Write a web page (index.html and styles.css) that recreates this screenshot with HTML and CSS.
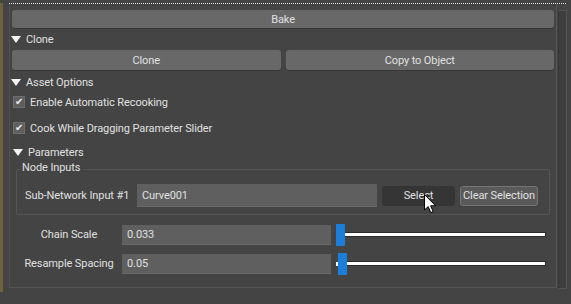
FILE: index.html
```html
<!DOCTYPE html>
<html lang="en">
<head>
    <meta charset="UTF-8">
    <title>Houdini Asset Options</title>
    <link rel="stylesheet" href="styles.css">
</head>
<body>
    <div class="frame">
        <div class="dots"></div>
        <div class="main">
            <div class="rollout">
                <div class="btn bake">Bake</div>

                <div class="head"><span class="tri"></span>Clone</div>
                <div class="pair">
                    <div class="btn">Clone</div>
                    <div class="btn">Copy to Object</div>
                </div>

                <div class="head head-asset"><span class="tri"></span>Asset Options</div>
                <div class="check"><span class="box">&#10004;</span>Enable Automatic Recooking</div>
                <div class="check check-2"><span class="box">&#10004;</span>Cook While Dragging Parameter Slider</div>

                <div class="head head-params"><span class="tri"></span>Parameters</div>
                <div class="params">
                    <div class="group">
                        <div class="legend">Node Inputs</div>
                        <div class="input-row">
                            <span class="input-label">Sub-Network Input #1</span>
                            <div class="field field-input">Curve001</div>
                            <div class="btn btn-select">Select</div>
                            <div class="btn btn-clear">Clear Selection</div>
                        </div>
                    </div>

                    <div class="param">
                        <span class="param-label">Chain Scale</span>
                        <div class="field">0.033</div>
                        <div class="slider">
                            <span class="thumb"></span>
                            <span class="track"></span>
                        </div>
                    </div>
                    <div class="param">
                        <span class="param-label">Resample Spacing</span>
                        <div class="field">0.05</div>
                        <div class="slider slider-low">
                            <span class="thumb"></span>
                            <span class="track"></span>
                        </div>
                    </div>
                </div>
            </div>
            <div class="scroll"></div>
        </div>

        <!-- mouse pointer over the Select button -->
        <svg class="cursor" width="13" height="20" viewBox="0 0 13 20">
            <path d="M0.5 0.5 L0.5 16 L4.2 12.6 L6.8 18.6 L9.2 17.6 L6.6 11.8 L11.6 11.8 Z" fill="#fff" stroke="#000" stroke-width="1"/>
        </svg>
    </div>
</body>
</html>
```

FILE: styles.css
```css
html{
    box-sizing: border-box;
    font-family: Roboto, "Liberation Sans", Arial, sans-serif;
    font-size: 11px;
    letter-spacing: -0.1px;
}

*,
*:after,
*:before{
    box-sizing: inherit;
}

body{
    margin: 0;
    width: 571px;
    height: 304px;
    background-color: #444444;
    color: #e0e0e0;
    overflow: hidden;
}

.frame{
    position: relative;
    height: 289px;
    border-left: 3px solid #6d6140;
}

.dots{
    margin: 3px 0 0 6px;
    width: 558px;
    height: 1px;
    background: repeating-linear-gradient(90deg, #e8e8e8 0 1px, #3a3a3a 1px 2px);
}

.main{
    display: flex;
    height: 285px;
}

.rollout{
    margin-left: 6px;
    width: 548px;
    padding: 6px 2px 0;
    border-left: 1px solid #505050;
    border-right: 1px solid #575757;
    border-bottom: 1px solid #555555;
    height: 284px;
}

.scroll{
    margin: 6px 0 0 1px;
    width: 9px;
    height: 279px;
    border: 1px solid #555555;
    border-left-color: #363636;
    background-color: #3e3e3e;
}

.btn{
    display: flex;
    align-items: center;
    justify-content: center;
    background-color: #686868;
    border-radius: 3px;
    box-shadow: 0 1px 0 #383838;
    white-space: nowrap;
}

.bake{
    height: 18px;
}

.head{
    display: flex;
    align-items: center;
    height: 22px;
}

.head-asset{
    height: 24px;
}

.head-params{
    margin-top: 4px;
    height: 24px;
    padding-left: 2px;
}

.tri{
    width: 0;
    height: 0;
    margin: 0 5px 0 -1px;
    border-left: 5px solid transparent;
    border-right: 5px solid transparent;
    border-top: 7px solid #f4f4f4;
}

.pair{
    display: flex;
    gap: 5px;
    height: 20px;
}

.pair .btn{
    flex: 1;
}

.check{
    display: flex;
    align-items: center;
    height: 16px;
    padding-left: 1px;
}

.check-2{
    margin-top: 10px;
}

.box{
    display: flex;
    align-items: center;
    justify-content: center;
    width: 12px;
    height: 12px;
    margin-right: 5px;
    background-color: #5e5e5e;
    border: 1px solid #6e6e6e;
    color: #eeeeee;
    font-size: 10px;
    line-height: 1;
}

.params{
    height: 124px;
}

.group{
    position: relative;
    margin: 5px 4px 0;
    height: 46px;
    padding: 14px 10px 0 8px;
    border: 1px solid #555555;
    border-radius: 2px;
}

.legend{
    position: absolute;
    top: -9px;
    left: 3px;
    padding: 0 3px 0 2px;
    background-color: #444444;
    line-height: 14px;
}

.input-row{
    display: flex;
    align-items: center;
    height: 23px;
}

.input-label{
    width: 112px;
    white-space: nowrap;
}

.field{
    display: flex;
    align-items: center;
    padding-left: 5px;
    height: 20px;
    width: 209px;
    background-color: #5f5f5f;
    border-bottom: 1px solid #6a6a6a;
}

.field-input{
    width: 240px;
    height: 23px;
}

.btn-select{
    margin-left: 5px;
    width: 73px;
    height: 20px;
    background-color: #353535;
    box-shadow: none;
}

.btn-clear{
    margin-left: 5px;
    width: 78px;
    height: 20px;
    background-color: #5a5a5a;
    border: 1px solid #757575;
    box-shadow: none;
}

.param{
    display: flex;
    align-items: center;
    height: 29px;
}

.group + .param{
    margin-top: 5px;
}

.param-label{
    width: 106px;
    margin-left: 4px;
    text-align: center;
    white-space: nowrap;
}

.slider{
    display: flex;
    align-items: center;
    margin-left: 5px;
    width: 210px;
    height: 22px;
}

.thumb{
    width: 9px;
    height: 22px;
    background-color: #1b7fd9;
    border-radius: 1px;
    flex: none;
}

.track{
    flex: 1;
    height: 5px;
    background-color: #ffffff;
    border: 1px solid #2a2a2a;
    border-left: none;
}

.slider-low{
    background: linear-gradient(#fff, #fff) 0 9px / 2px 4px no-repeat;
}

.slider-low .thumb{
    margin-left: 2px;
}

.cursor{
    position: absolute;
    left: 421px;
    top: 191px;
}
```
